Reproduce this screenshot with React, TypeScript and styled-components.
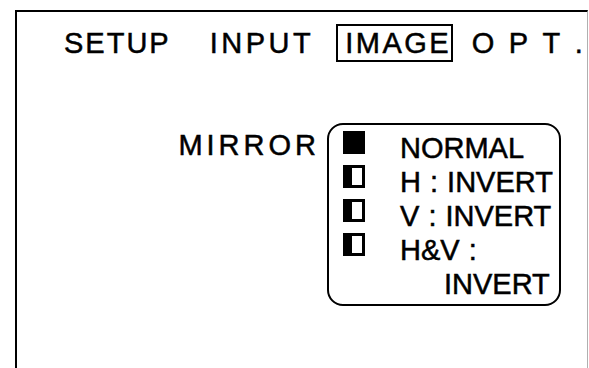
import React from "react";
import styled, { createGlobalStyle } from "styled-components";

const GlobalStyle = createGlobalStyle`
  html, body { margin: 0; padding: 0; background: #fff; }
  body { font-family: "Liberation Sans", Arial, sans-serif; color: #000; }
`;

const Screen = styled.div`
  width: 589px;
  height: 368px;
  overflow: hidden;
  background: #fff;
  padding: 10px 0 0 15px;
  box-sizing: border-box;
`;

const Frame = styled.div`
  width: 573px;
  height: 358px;
  box-sizing: border-box;
  border-left: 2px solid #000;
  border-top: 2px solid #000;
  border-right: 1px solid #b0b0b0;
  display: flex;
  flex-direction: column;
`;

const TabBar = styled.div`
  display: flex;
  align-items: center;
  margin-top: 12px;
  padding-left: 38px;
`;

const Tab = styled.div<{ $active?: boolean; $spacing: number; $gap: number; $last?: boolean }>`
  font-size: 29px;
  line-height: 34px;
  letter-spacing: ${(p) => p.$spacing}px;
  -webkit-text-stroke: 0.5px #000;
  padding: 0 ${(p) => (p.$last ? 0 : p.$active ? 2 : 7)}px 0 7px;
  margin-right: ${(p) => p.$gap}px;
  border: 2px solid ${(p) => (p.$active ? "#000" : "transparent")};
  white-space: nowrap;
`;

const LastChar = styled.span`
  letter-spacing: 0;
`;

const Content = styled.div`
  display: flex;
  justify-content: flex-end;
  align-items: flex-start;
  gap: 7px;
  margin-top: 61px;
  padding-right: 26px;
`;

const Label = styled.div`
  font-size: 29px;
  line-height: 34px;
  letter-spacing: 4px;
  -webkit-text-stroke: 0.5px #000;
  margin-top: 5px;
`;

const OptionBox = styled.div`
  width: 234px;
  height: 183px;
  box-sizing: border-box;
  border: 2px solid #000;
  border-radius: 16px;
  padding: 6px 0 0 14px;
  display: flex;
  flex-direction: column;
`;

const OptionRow = styled.div`
  display: flex;
  align-items: flex-start;
  gap: 35px;
  font-size: 29px;
  line-height: 34px;
  -webkit-text-stroke: 0.5px #000;
  white-space: nowrap;
`;

const Check = styled.span<{ $selected?: boolean }>`
  flex: none;
  display: block;
  width: 22px;
  height: 23px;
  box-sizing: border-box;
  background: ${(p) => (p.$selected ? "#000" : "#fff")};
  border: 3px solid #000;
  border-left-width: ${(p) => (p.$selected ? 3 : 9)}px;
`;

const OptionText = styled.span`
  word-spacing: 1px;
`;

const Continuation = styled.div`
  font-size: 29px;
  line-height: 34px;
  -webkit-text-stroke: 0.5px #000;
  padding-left: 101px;
  white-space: nowrap;
`;

const tabs = [
  { label: "SETUP", spacing: 2, gap: 23 },
  { label: "INPUT", spacing: 3.5, gap: 16.5 },
  { label: "IMAGE", spacing: 2.5, gap: 10, active: true },
  { label: "OPT.", spacing: 14.5, gap: 0, last: true },
];

const options = [
  { label: "NORMAL", selected: true },
  { label: "H : INVERT" },
  { label: "V : INVERT" },
  { label: "H&V :" },
];

export default function App() {
  return (
    <>
      <GlobalStyle />
      <Screen>
        <Frame>
          <TabBar>
            {tabs.map((t) => (
              <Tab
                key={t.label}
                $active={t.active}
                $last={t.last}
                $spacing={t.spacing}
                $gap={t.gap}
              >
                {t.label.slice(0, -1)}
                <LastChar>{t.label.slice(-1)}</LastChar>
              </Tab>
            ))}
          </TabBar>
          <Content>
            <Label>MIRROR</Label>
            <OptionBox>
              {options.map((o) => (
                <OptionRow key={o.label}>
                  <Check $selected={o.selected} />
                  <OptionText>{o.label}</OptionText>
                </OptionRow>
              ))}
              <Continuation>INVERT</Continuation>
            </OptionBox>
          </Content>
        </Frame>
      </Screen>
    </>
  );
}
